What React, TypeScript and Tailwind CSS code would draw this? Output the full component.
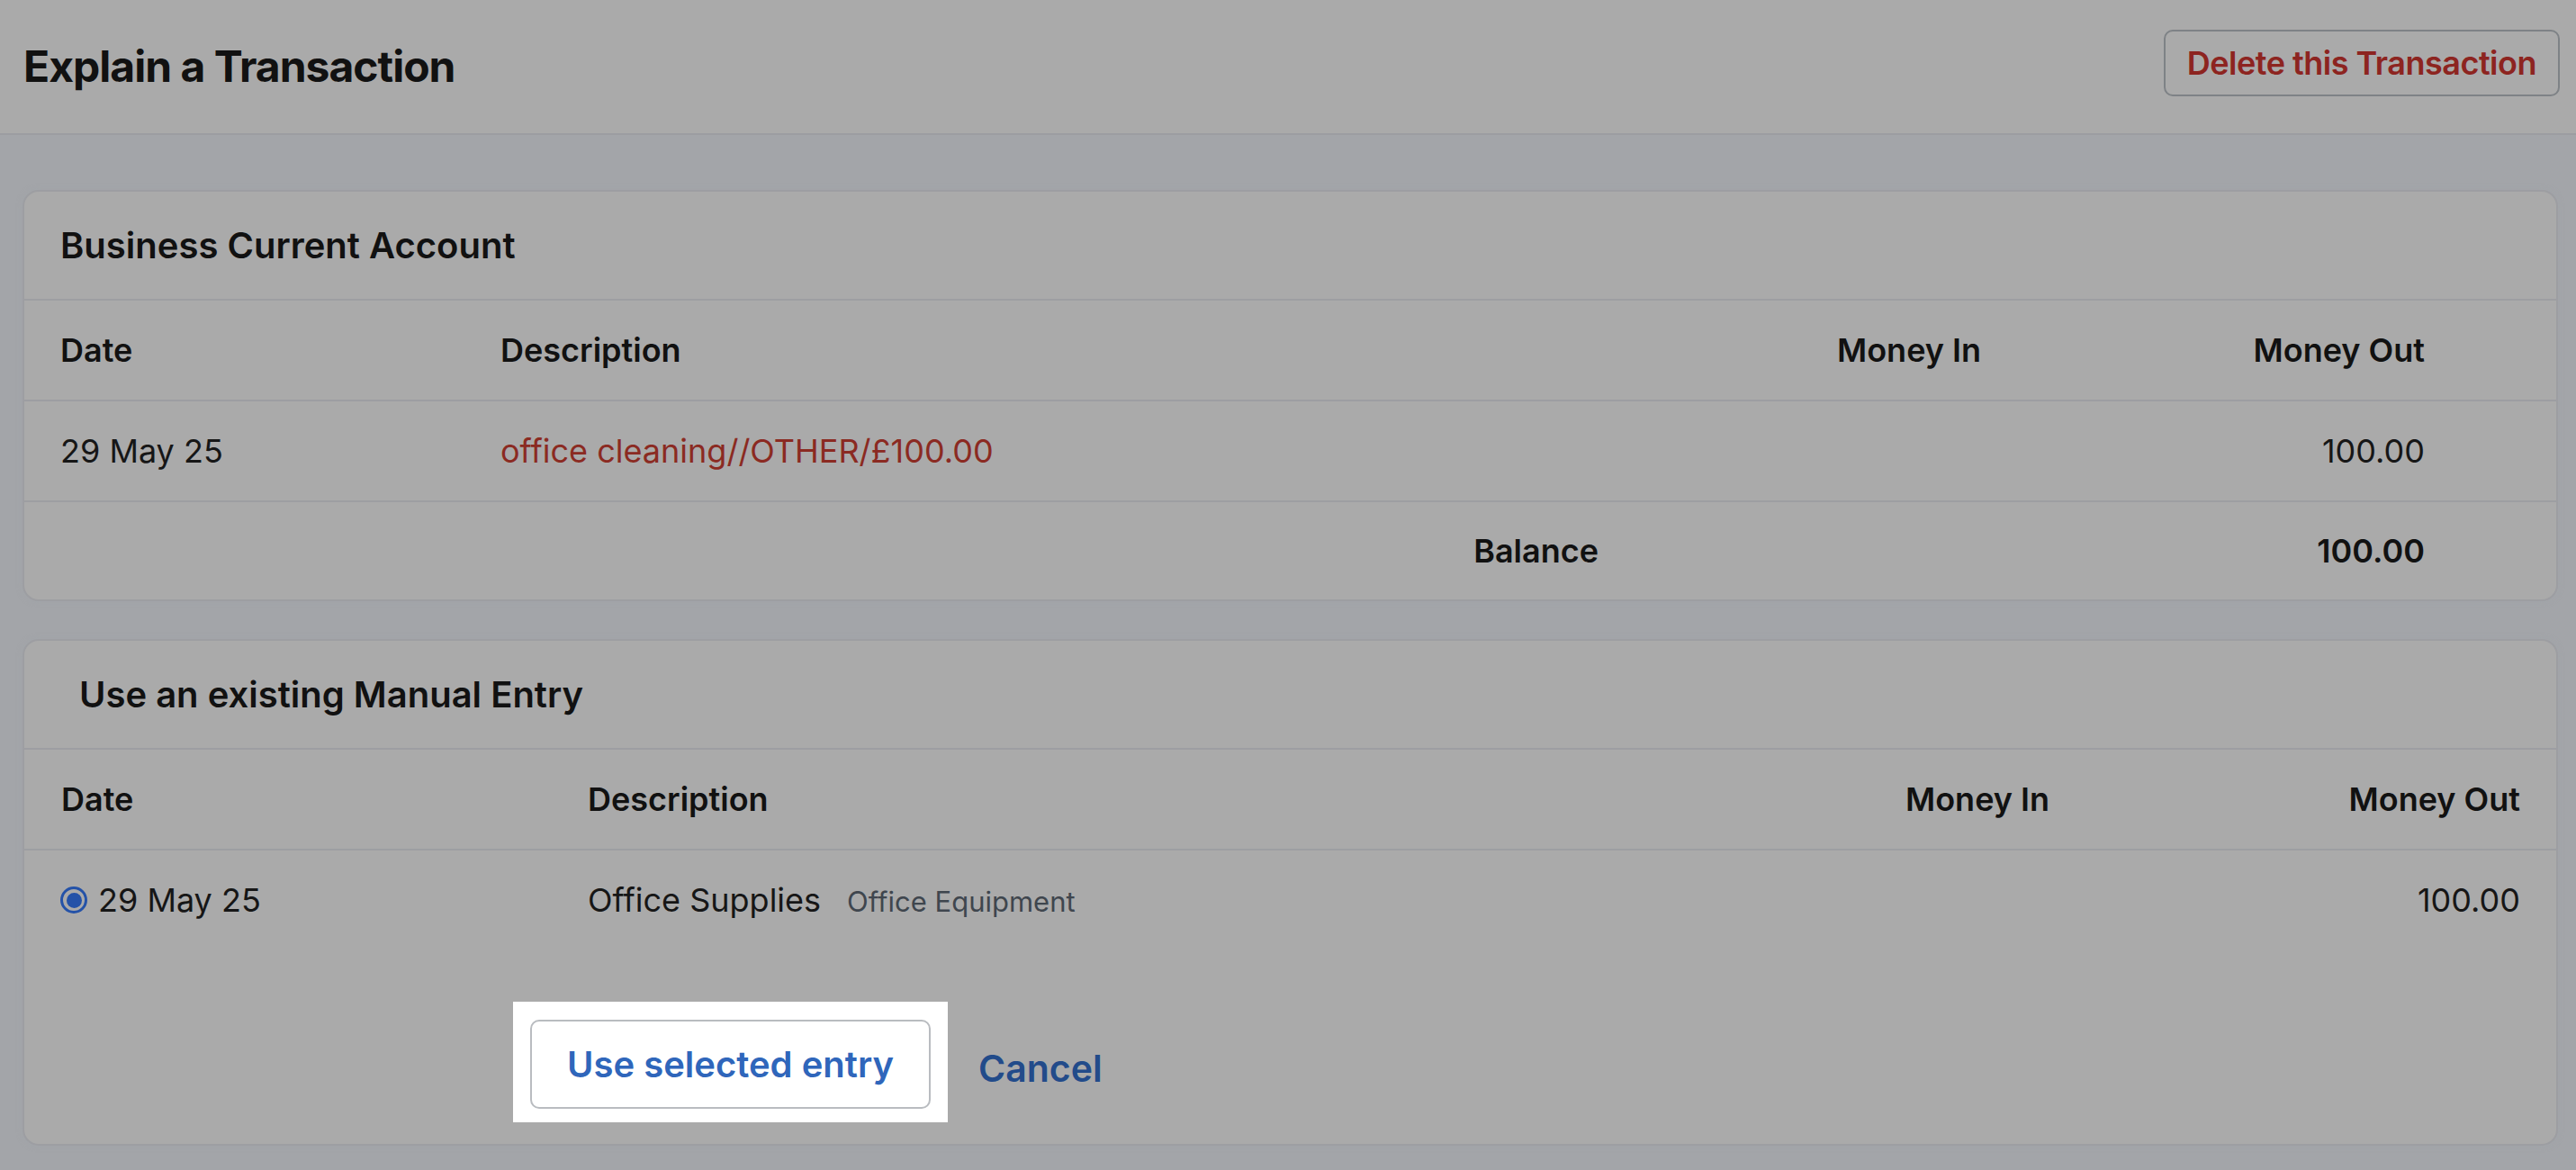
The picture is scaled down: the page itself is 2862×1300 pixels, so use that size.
import React from "react";

const font = { fontFamily: "Inter, 'Noto Sans', sans-serif" };

function Radio() {
  return (
    <span className="flex h-[30px] w-[30px] shrink-0 items-center justify-center rounded-full border-[3px] border-[#2452a8]">
      <span className="h-[17px] w-[17px] rounded-full bg-[#2452a8]" />
    </span>
  );
}

function AccountCard() {
  return (
    <section className="overflow-hidden rounded-[18px] border-2 border-[#9d9ea2] bg-[#aaaaaa] shadow-[0_0_6px_rgba(160,165,170,0.6)]">
      <div className="flex h-[121px] items-center border-b-2 border-[#9d9ea2] pl-[40px]">
        <h2 className="text-[40px] font-semibold text-[#111111]">Business Current Account</h2>
      </div>
      <div className="flex h-[112px] items-center border-b-2 border-[#9d9ea2] pl-[40px] pr-[146px] text-[36px] font-semibold text-[#111111]">
        <div className="w-[489px]">Date</div>
        <div className="flex-1">Description</div>
        <div className="w-[400px] text-right">Money In</div>
        <div className="w-[493px] text-right">Money Out</div>
      </div>
      <div className="flex h-[112px] items-center border-b-2 border-[#9d9ea2] pl-[40px] pr-[146px] text-[36px] text-[#161616]">
        <div className="w-[489px]">29 May 25</div>
        <div className="flex-1 text-[#8b2a22]">office cleaning//OTHER/£100.00</div>
        <div className="w-[400px] text-right" />
        <div className="w-[493px] text-right">100.00</div>
      </div>
      <div className="flex h-[108px] items-center pl-[40px] pr-[146px] text-[36px] font-semibold text-[#111111]">
        <div className="flex-1 text-right">Balance</div>
        <div className="w-[425px]" />
        <div className="w-[493px] text-right">100.00</div>
      </div>
    </section>
  );
}

function ManualEntryCard() {
  return (
    <section className="overflow-hidden rounded-[18px] border-2 border-[#9d9ea2] bg-[#aaaaaa] shadow-[0_0_6px_rgba(160,165,170,0.6)]">
      <div className="flex h-[121px] items-center border-b-2 border-[#9d9ea2] pl-[61px]">
        <h2 className="text-[40px] font-semibold text-[#111111]">Use an existing Manual Entry</h2>
      </div>
      <div className="flex h-[112px] items-center border-b-2 border-[#9d9ea2] pl-[41px] pr-[40px] text-[36px] font-semibold text-[#111111]">
        <div className="w-[585px]">Date</div>
        <div className="flex-1">Description</div>
        <div className="w-[400px] text-right">Money In</div>
        <div className="w-[523px] text-right">Money Out</div>
      </div>
      <div className="flex h-[110px] items-center pl-[40px] pr-[40px] text-[36px] text-[#161616]">
        <div className="flex w-[586px] items-center gap-[12px]">
          <Radio />
          <span>29 May 25</span>
        </div>
        <div className="flex flex-1 items-baseline gap-[29px]">
          <span>Office Supplies</span>
          <span className="text-[31px] text-[#3f464e]">Office Equipment</span>
        </div>
        <div className="w-[400px] text-right" />
        <div className="w-[523px] text-right">100.00</div>
      </div>
      <div className="flex items-center pb-[24px] pl-[543px] pt-[58px]">
        <div className="bg-white px-[19px] pb-[15px] pt-[20px]">
          <button className="flex h-[99px] w-[445px] items-center justify-center rounded-[10px] border-2 border-[#b9bcc0] bg-white text-[40px] font-semibold text-[#2f66bb]">
            Use selected entry
          </button>
        </div>
        <a className="ml-[34px] mt-[16px] text-[41px] font-semibold text-[#224b8a]">Cancel</a>
      </div>
    </section>
  );
}

export default function App() {
  return (
    <div style={font} className="min-h-[1300px] bg-[#a3a5a9]">
      <header className="flex h-[150px] items-center justify-between border-b-2 border-[#9c9da1] bg-[#aaaaaa] pb-[8px] pl-[26px] pr-[18px]">
        <h1 className="mt-[8px] text-[48px] font-bold tracking-[-1px] text-[#111111]">Explain a Transaction</h1>
        <button className="flex h-[74px] items-center rounded-[10px] border-2 border-[#7e8286] px-[24px] text-[36px] font-semibold tracking-[-0.5px] text-[#8d2420]">
          Delete this Transaction
        </button>
      </header>
      <main className="flex flex-col gap-[42px] pl-[25px] pr-[20px] pt-[61px]">
        <AccountCard />
        <ManualEntryCard />
      </main>
    </div>
  );
}
